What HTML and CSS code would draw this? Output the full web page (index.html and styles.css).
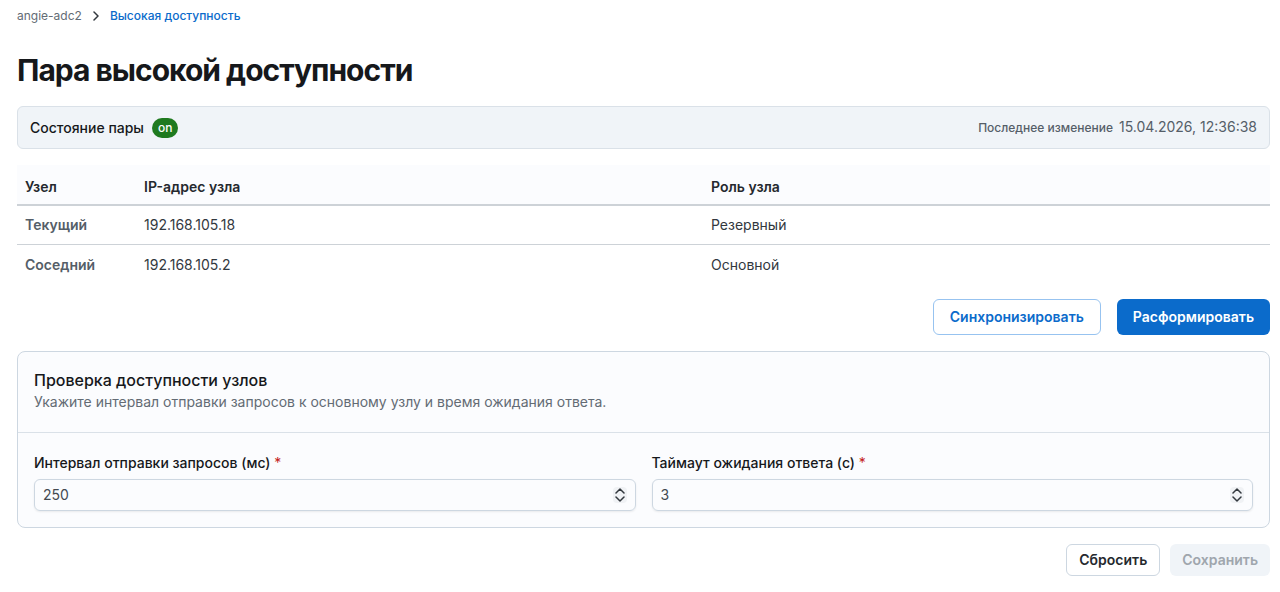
FILE: index.html
```html
<!DOCTYPE html>
<html lang="ru">
  <head>
    <meta charset="UTF-8" />
    <meta name="viewport" content="width=device-width, initial-scale=1.0" />
    <title>Высокая доступность</title>
    <link rel="stylesheet" href="styles.css">
  </head>
  <body>
    <div class="page">
      <nav class="breadcrumbs">
        <a href="#">angie-adc2</a>
        <svg width="8" height="10" viewBox="0 0 8 10">
          <path d="M2 1l4 4-4 4" />
        </svg>
        <a href="#" class="current">Высокая доступность</a>
      </nav>
      <h1>Пара высокой доступности</h1>
      <div class="status">
        <span class="status-label">Состояние пары</span>
        <span class="badge">on</span>
        <div class="changed">
          <span class="changed-label">Последнее изменение</span>
          <span class="changed-date">15.04.2026, 12:36:38</span>
        </div>
      </div>
      <table class="nodes">
        <thead>
          <tr>
            <th class="col-node">Узел</th>
            <th>IP-адрес узла</th>
            <th>Роль узла</th>
          </tr>
        </thead>
        <tbody>
          <tr>
            <th>Текущий</th>
            <td>192.168.105.18</td>
            <td>Резервный</td>
          </tr>
          <tr>
            <th>Соседний</th>
            <td>192.168.105.2</td>
            <td>Основной</td>
          </tr>
        </tbody>
      </table>
      <div class="actions pair-actions">
        <button type="button" class="button outline">Синхронизировать</button>
        <button type="button" class="button primary">Расформировать</button>
      </div>
      <form>
        <div class="card">
          <div class="card-header">
            <h2>Проверка доступности узлов</h2>
            <p>Укажите интервал отправки запросов к основному узлу и время ожидания ответа.</p>
          </div>
          <div class="card-body">
            <div class="field">
              <label for="interval">Интервал отправки запросов (мс) <span class="required">*</span></label>
              <div class="number">
                <input type="number" id="interval" value="250" />
                <div class="stepper">
                  <button type="button" aria-label="Больше" onclick="interval.stepUp()">
                    <svg width="10" height="6" viewBox="0 0 10 6"><path d="M1 5l4-4 4 4" /></svg>
                  </button>
                  <button type="button" aria-label="Меньше" onclick="interval.stepDown()">
                    <svg width="10" height="6" viewBox="0 0 10 6"><path d="M1 1l4 4 4-4" /></svg>
                  </button>
                </div>
              </div>
            </div>
            <div class="field">
              <label for="timeout">Таймаут ожидания ответа (с) <span class="required">*</span></label>
              <div class="number">
                <input type="number" id="timeout" value="3" />
                <div class="stepper">
                  <button type="button" aria-label="Больше" onclick="timeout.stepUp()">
                    <svg width="10" height="6" viewBox="0 0 10 6"><path d="M1 5l4-4 4 4" /></svg>
                  </button>
                  <button type="button" aria-label="Меньше" onclick="timeout.stepDown()">
                    <svg width="10" height="6" viewBox="0 0 10 6"><path d="M1 1l4 4 4-4" /></svg>
                  </button>
                </div>
              </div>
            </div>
          </div>
        </div>
        <div class="actions form-actions">
          <button type="reset" class="button reset">Сбросить</button>
          <button type="submit" class="button save" disabled>Сохранить</button>
        </div>
      </form>
    </div>
  </body>
</html>
```

FILE: styles.css
```css
* {
  box-sizing: border-box;
}
body {
  font-family: Inter, sans-serif;
  font-size: 14px;
  line-height: 20px;
  background-color: #fff;
  color: #16181b;
  margin: 0;
}
.page {
  padding: 8px 10px 16px 17px;
}
.breadcrumbs {
  display: flex;
  align-items: center;
  gap: 10px;
  font-size: 12px;
  line-height: 16px;
}
.breadcrumbs a {
  color: #636b74;
  text-decoration: none;
}
.breadcrumbs .current {
  color: #0b6bcb;
  font-weight: 500;
}
svg {
  fill: none;
  stroke: #32383e;
  stroke-width: 1.5;
  stroke-linecap: round;
  stroke-linejoin: round;
}
h1 {
  font-size: 30px;
  line-height: 40px;
  font-weight: 700;
  letter-spacing: -1px;
  margin: 26px 0 16px;
}
.status {
  display: flex;
  align-items: center;
  gap: 8px;
  padding: 10px 12px;
  background-color: #f0f4f8;
  border: 1px solid #dae1e8;
  border-radius: 6px;
}
.status-label {
  font-weight: 500;
}
.badge {
  padding: 0 6px;
  background-color: #1f7a1f;
  border-radius: 10px;
  color: #fff;
  font-size: 12px;
  font-weight: 500;
}
.changed {
  display: flex;
  align-items: baseline;
  gap: 6px;
  margin-left: auto;
  color: #555e68;
}
.changed-label {
  font-size: 12px;
  font-weight: 500;
}
.nodes {
  width: 100%;
  margin-top: 16px;
  border-collapse: separate;
  border-spacing: 0;
  table-layout: fixed;
}
.nodes th,
.nodes td {
  height: 40px;
  padding: 0 8px;
  text-align: left;
  color: #32383e;
}
.nodes th {
  font-weight: 600;
}
.nodes thead th {
  height: 41px;
  padding-top: 4px;
  background-color: #fbfcfe;
  border-bottom: 2px solid #cdd2d7;
  color: #25292e;
}
.nodes tbody th {
  color: #555e68;
}
.nodes tbody tr:first-child > * {
  height: 39px;
  border-bottom: 1px solid #cdd2d7;
}
.nodes .col-node {
  width: 119px;
}
.actions {
  display: flex;
  justify-content: flex-end;
}
.pair-actions {
  gap: 16px;
  margin: 14px 0 16px;
}
.form-actions {
  gap: 10px;
  margin-top: 16px;
}
.button {
  height: 32px;
  padding: 0 12px;
  border: none;
  border-radius: 6px;
  font: inherit;
  font-weight: 600;
  cursor: pointer;
}
.pair-actions .button {
  height: 36px;
  padding: 0 16px;
}
.outline {
  background-color: #fff;
  border: 1px solid #97c3f0;
  color: #0b6bcb;
}
.primary {
  background-color: #0b6bcb;
  color: #fff;
}
.reset {
  background-color: #fff;
  border: 1px solid #cdd7e1;
  color: #25292e;
}
.save {
  background-color: #f0f4f8;
  color: #9fa6ad;
  cursor: default;
}
.card {
  background-color: #fbfcfe;
  border: 1px solid #cdd7e1;
  border-radius: 8px;
}
.card-header {
  padding: 16px 16px 20px;
  border-bottom: 1px solid #dae1e8;
}
.card-header h2 {
  margin: 0;
  font-size: 16px;
  line-height: 24px;
  font-weight: 500;
}
.card-header p {
  margin: 0;
  color: #636b74;
}
.card-body {
  display: grid;
  grid-template-columns: 1fr 1fr;
  gap: 16px;
  padding: 20px 16px 16px;
}
.field label {
  display: block;
  margin-bottom: 6px;
  font-weight: 500;
}
.required {
  color: #c41c1c;
  font-weight: 400;
}
.number {
  display: flex;
  align-items: center;
  height: 32px;
  padding: 0 8px;
  border: 1px solid #cdd7e1;
  border-radius: 6px;
  box-shadow: 0 1px 2px rgba(21, 21, 21, 0.08);
}
.number input {
  flex: 1;
  min-width: 0;
  padding: 0;
  border: none;
  outline: none;
  background: none;
  color: #434a51;
  font: inherit;
  appearance: textfield;
}
.stepper {
  display: flex;
  flex-direction: column;
  gap: 2px;
  padding: 1px;
  border-radius: 4px;
  background-color: #f0f2f5;
}
.stepper button {
  display: flex;
  padding: 0 1px;
  border: none;
  background: none;
  cursor: pointer;
}
```
